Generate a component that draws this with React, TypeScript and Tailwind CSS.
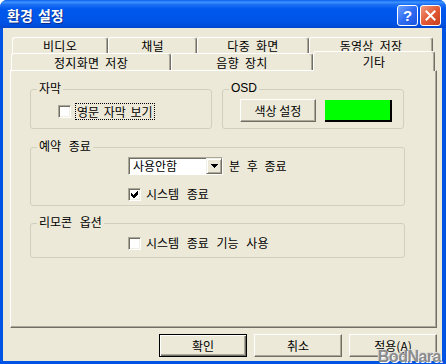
import React from "react";

function Check({ checked = false }: { checked?: boolean }) {
  return (
    <span className="w-[13px] h-[13px] shrink-0 bg-white border border-t-[#ACA899] border-l-[#ACA899] border-r-white border-b-white shadow-[inset_1px_1px_0_#716F64,inset_-1px_-1px_0_#F1EFE2] flex items-center justify-center">
      {checked && (
        <svg width="7" height="7" viewBox="0 0 7 7" shapeRendering="crispEdges">
          <polygon points="0,2 2,4 6,0 7,0 7,3 3,7 2,7 0,5" fill="#000" />
        </svg>
      )}
    </span>
  );
}

const tabCls =
  "flex items-center justify-center border-t border-l border-r border-t-white border-l-white border-r-[#716F64] rounded-t-[3px] shadow-[inset_-1px_0_0_#ACA899] text-[12px] leading-[14px] text-black bg-[#ECE9D8] [word-spacing:3px] tracking-[0.3px]";

const btnCls =
  "h-[23px] flex items-center justify-center bg-[#ECE9D8] border border-t-white border-l-white border-r-[#716F64] border-b-[#716F64] shadow-[inset_-1px_-1px_0_#ACA899] text-[12px] leading-[14px] text-black";

const groupCls = "border border-[#D0D0BF] rounded-[3px] flex flex-col";
const legendCls = "-mt-[9px] ml-[6px] px-[2px] self-start bg-[#ECE9D8] text-[12px] leading-[14px] text-black";

export default function App() {
  return (
    <div className="w-[446px] h-[364px] bg-[#0054E3] rounded-t-[7px] flex flex-col relative overflow-hidden font-['Noto_Sans_CJK_KR','Noto_Sans',sans-serif]">
      {/* Title bar */}
      <div className="h-[28px] shrink-0 flex items-center pl-[7px] pr-[5px] bg-[linear-gradient(to_bottom,#0A5FEE_0%,#3D95FF_8%,#1E70F4_16%,#0058EE_32%,#0055E8_70%,#0050E0_88%,#0045CF_100%)]">
        <span className="text-white font-bold text-[14px] leading-[16px] mt-[1px] [word-spacing:2px] [text-shadow:1px_1px_0_#0B2C8A]">
          환경 설정
        </span>
        <div className="ml-auto flex gap-[2px] mt-[2px]">
          <div className="w-[21px] h-[21px] rounded-[3px] border border-white bg-[linear-gradient(135deg,#6FA2FF_0%,#2E6BF2_50%,#1C55E0_100%)] flex items-center justify-center">
            <span className="text-white font-bold text-[15px] leading-[15px] font-['Liberation_Sans',sans-serif]">?</span>
          </div>
          <div className="w-[21px] h-[21px] rounded-[3px] border border-white bg-[linear-gradient(135deg,#F09A7E_0%,#E25A36_50%,#C83E1B_100%)] flex items-center justify-center">
            <svg width="11" height="11" viewBox="0 0 11 11">
              <path d="M1.5 1.5 L9.5 9.5 M9.5 1.5 L1.5 9.5" stroke="#fff" strokeWidth="2" strokeLinecap="square" />
            </svg>
          </div>
        </div>
      </div>

      {/* Body */}
      <div className="flex-1 ml-[3px] mr-[4px] mb-[3px] bg-[#ECE9D8] flex flex-col pl-[7px] pr-[5px] pt-[9px]">
        {/* Tabs row 1 */}
        <div className="flex h-[16px] ml-[2px]">
          <div className={tabCls + " w-[96px] h-[16px]"}>비디오</div>
          <div className={tabCls + " w-[89px] h-[16px]"}>채널</div>
          <div className={tabCls + " w-[112px] h-[16px]"}>다중 화면</div>
          <div className={tabCls + " w-[124px] h-[16px]"}>동영상 저장</div>
        </div>
        {/* Tabs row 2 */}
        <div className="flex h-[17px] items-end ml-[1px]">
          <div className={tabCls + " w-[160px] h-[17px] pt-[2px]"}>정지화면 저장</div>
          <div className={tabCls + " w-[142px] h-[17px] pt-[2px]"}>음향 장치</div>
          <div className={tabCls + " w-[122px] h-[20px] -mb-[1px] relative z-10"}>기타</div>
        </div>

        {/* Panel */}
        <div className="h-[258px] shrink-0 border border-t-white border-l-white border-r-[#716F64] border-b-[#716F64] shadow-[inset_-1px_-1px_0_#ACA899] pl-[19px] pt-[18px] flex flex-col">
          <div className="flex gap-[10px]">
            {/* 자막 */}
            <div className={groupCls + " w-[182px] h-[40px]"}>
              <span className={legendCls}>자막</span>
              <div className="flex items-center ml-[27px] mt-[8px] h-[17px]">
                <Check />
                <span className="ml-[4px] h-[17px] px-[1px] border border-dotted border-black flex items-center text-[12px] leading-[14px] text-black [word-spacing:2px]">
                  영문 자막 보기
                </span>
              </div>
            </div>
            {/* OSD */}
            <div className={groupCls + " w-[182px] h-[40px]"}>
              <span className={legendCls + " font-['Liberation_Sans',sans-serif]"}>OSD</span>
              <div className="flex items-center ml-[17px] mt-[4px]">
                <div className={btnCls + " w-[76px]"}>색상 설정</div>
                <div className="ml-[9px] w-[67px] h-[22px] bg-[#00FF00] border-r-2 border-b-2 border-black"></div>
              </div>
            </div>
          </div>

          {/* 예약 종료 */}
          <div className={groupCls + " w-[375px] h-[59px] mt-[18px]"}>
            <span className={legendCls + " [word-spacing:5px]"}>예약 종료</span>
            <div className="flex items-center ml-[97px] mt-[4px]">
              <div className="w-[95px] h-[18px] bg-white flex border border-t-[#ACA899] border-l-[#ACA899] border-r-white border-b-white shadow-[inset_1px_1px_0_#716F64]">
                <span className="flex-1 pl-[4px] pt-[1px] text-[12px] leading-[14px] text-black">사용안함</span>
                <div className="w-[16px] h-[16px] bg-[#ECE9D8] border border-t-[#F1EFE2] border-l-[#F1EFE2] border-r-[#716F64] border-b-[#716F64] shadow-[inset_1px_1px_0_#fff,inset_-1px_-1px_0_#ACA899] flex items-center justify-center">
                  <svg width="7" height="4" viewBox="0 0 7 4" shapeRendering="crispEdges">
                    <polygon points="0,0 7,0 3.5,4" fill="#000" />
                  </svg>
                </div>
              </div>
              <span className="ml-[6px] text-[12px] leading-[14px] text-black [word-spacing:4px]">분 후 종료</span>
            </div>
            <div className="flex items-center ml-[97px] mt-[12px]">
              <Check checked />
              <span className="ml-[5px] text-[12px] leading-[14px] text-black [word-spacing:5px]">시스템 종료</span>
            </div>
          </div>

          {/* 리모콘 옵션 */}
          <div className={groupCls + " w-[375px] h-[35px] mt-[17px]"}>
            <span className={legendCls + " [word-spacing:5px]"}>리모콘 옵션</span>
            <div className="flex items-center ml-[97px] mt-[7px]">
              <Check />
              <span className="ml-[5px] text-[12px] leading-[14px] text-black [word-spacing:5px]">시스템 종료 기능 사용</span>
            </div>
          </div>
        </div>

        {/* Buttons */}
        <div className="flex justify-end gap-[7px] mt-[6px]">
          <div className="w-[88px] h-[23px] flex items-center justify-center bg-[#ECE9D8] border border-black shadow-[inset_1px_1px_0_#fff,inset_-1px_-1px_0_#716F64,inset_-2px_-2px_0_#ACA899] text-[12px] leading-[14px] text-black">
            확인
          </div>
          <div className={btnCls + " w-[88px]"}>취소</div>
          <div className={btnCls + " w-[88px]"}>
            적용(<span className="underline">A</span>)
          </div>
        </div>
      </div>

      {/* Watermark */}
      <span className="absolute right-[5px] bottom-[-1px] text-[16px] leading-[16px] font-bold tracking-[-0.5px] text-[#8C8C8C] font-['Liberation_Sans',sans-serif] [text-shadow:1px_1px_0_#fff,-1px_-1px_0_#d8d8d8]">
        BodNara
      </span>
    </div>
  );
}
